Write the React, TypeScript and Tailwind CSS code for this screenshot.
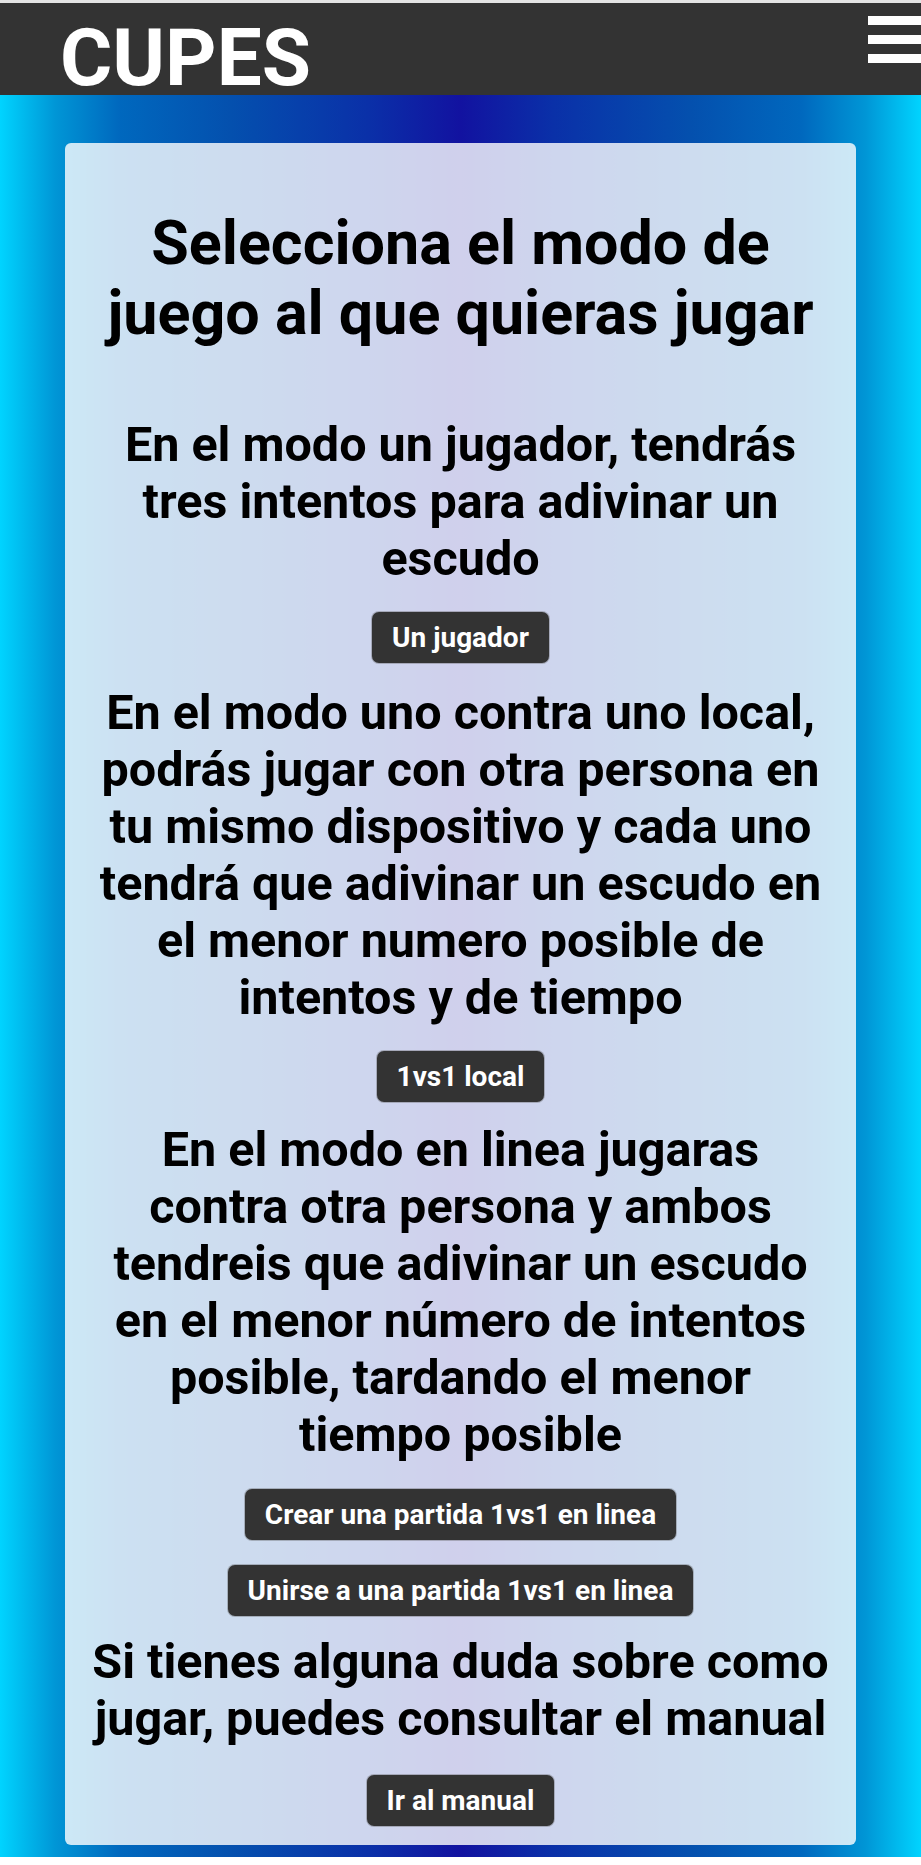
import { ReactNode } from 'react';

function ModeButton({ children, className = '' }: { children: ReactNode; className?: string }) {
  return (
    <button
      className={`rounded-[7px] bg-[#333333] px-5 py-[9px] text-[28px] font-bold leading-[33px] text-white shadow-[0_0_0_1px_rgba(90,90,90,0.35)] ${className}`}
    >
      {children}
    </button>
  );
}

export default function App() {
  return (
    <div className="flex min-h-[1865px] w-[921px] flex-col overflow-hidden bg-white font-['Roboto',sans-serif] text-black">
      <div className="h-[3px] bg-[#e4e4e4]" />
      <header className="flex h-[92px] items-start justify-between bg-[#333333]">
        <h1 className="ml-[60px] mt-[15px] text-[80px] font-bold leading-[80px] text-white">CUPES</h1>
        <div className="mt-[13px] flex w-[53px] flex-col gap-[10px]">
          <span className="h-[9px] bg-white" />
          <span className="h-[9px] bg-white" />
          <span className="h-[9px] bg-white" />
        </div>
      </header>

      <main className="bg-[linear-gradient(90deg,#00d4ff_0%,#0096d6_6%,#0068be_13%,#0450ae_25%,#0a30a8_40%,#1212a0_50%,#0a30a8_60%,#0450ae_75%,#0068be_87%,#0096d6_94%,#00d4ff_100%)] px-[65px] pb-[12px] pt-[48px]">
        <section className="flex flex-col items-center rounded-md bg-white/80 px-[26px] pb-[19px] pt-[65px] text-center">
          <h2 className="text-[61px] font-bold leading-[70px]">
            Selecciona el modo de juego al que quieras jugar
          </h2>

          <p className="mt-[68px] text-[48.5px] font-bold leading-[57px]">
            En el modo un jugador, tendrás tres intentos para adivinar un escudo
          </p>
          <ModeButton className="mt-[25px]">Un jugador</ModeButton>

          <p className="mt-[21px] text-[48.5px] font-bold leading-[57px]">
            En el modo uno contra uno local, podrás jugar con otra persona en tu mismo dispositivo y cada
            uno tendrá que adivinar un escudo en el menor numero posible de intentos y de tiempo
          </p>
          <ModeButton className="mt-[25px]">1vs1 local</ModeButton>

          <p className="mt-[19px] text-[48.5px] font-bold leading-[57px]">
            En el modo en linea jugaras contra otra persona y ambos tendreis que adivinar un escudo en el
            menor número de intentos posible, tardando el menor tiempo posible
          </p>
          <ModeButton className="mt-[26px]">Crear una partida 1vs1 en linea</ModeButton>
          <ModeButton className="mt-[25px]">Unirse a una partida 1vs1 en linea</ModeButton>

          <p className="mt-[17px] text-[48.5px] font-bold leading-[57px]">
            Si tienes alguna duda sobre como jugar, puedes consultar el manual
          </p>
          <ModeButton className="mt-[28px]">Ir al manual</ModeButton>
        </section>
      </main>
    </div>
  );
}
